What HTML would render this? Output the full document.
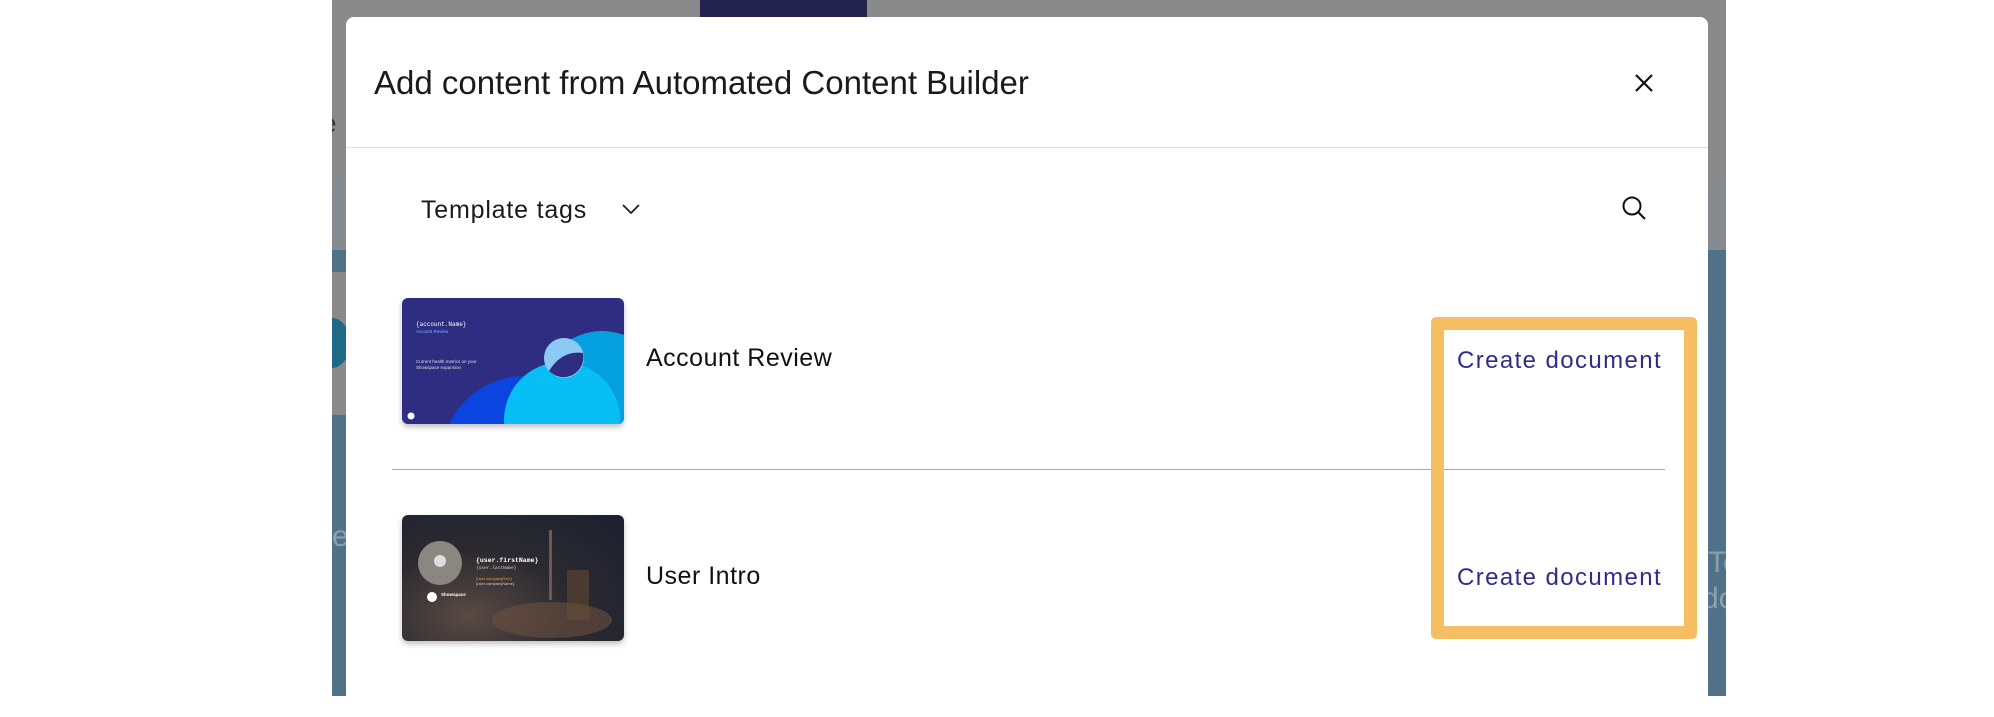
<!DOCTYPE html>
<html><head><meta charset="utf-8"><style>
*{margin:0;padding:0;box-sizing:border-box}
body{width:1994px;height:696px;overflow:hidden;background:#fff;position:relative;font-family:"Liberation Sans",sans-serif}
.abs{position:absolute}
</style></head><body>
<div class="abs" style="left:332px;top:0;width:1394px;height:696px;background:#4f7288;overflow:hidden">
  <div class="abs" style="left:1376px;top:546px;font-size:30px;color:#8aa0ad">Te</div>
  <div class="abs" style="left:1370px;top:582px;font-size:30px;color:#8aa0ad">do</div>
  <div class="abs" style="left:0;top:520px;font-size:30px;color:#8aa0ad">e</div>
</div>
<div class="abs" style="left:332px;top:0;width:1394px;height:175px;background:#8a8a8a"></div>
<div class="abs" style="left:332px;top:175px;width:1394px;height:75px;background:#868b90"></div>
<div class="abs" style="left:332px;top:272px;width:14px;height:143px;background:#8a8a8a"></div>
<div class="abs" style="left:332px;top:318px;width:14px;height:50px;overflow:hidden"><div style="position:absolute;left:-18px;top:0;width:36px;height:50px;border-radius:50%;background:#1d6a86"></div></div>
<div class="abs" style="left:332px;top:108px;width:14px;height:30px;overflow:hidden"><div style="position:absolute;left:-10px;top:0;font-size:26px;color:#333">e</div></div>
<div class="abs" style="left:700px;top:0;width:167px;height:17px;background:#23234d"></div>
<div class="abs" style="left:346px;top:17px;width:1362px;height:700px;background:#fff;border-radius:8px"></div>
<div class="abs" style="left:374px;top:64px;font-size:33px;color:#1a1a1a;white-space:nowrap">Add content from Automated Content Builder</div>
<svg class="abs" style="left:1634px;top:73px" width="20" height="20" viewBox="0 0 20 20"><path d="M2 2L18 18M18 2L2 18" stroke="#111" stroke-width="2.2"/></svg>
<div class="abs" style="left:346px;top:147px;width:1362px;height:1px;background:#e0e0e0"></div>
<div class="abs" style="left:421px;top:196px;font-size:25px;color:#1a1a1a;letter-spacing:0.8px">Template tags</div>
<svg class="abs" style="left:621px;top:202px" width="20" height="14" viewBox="0 0 20 14"><path d="M2 3L10 11L18 3" stroke="#222" stroke-width="1.8" fill="none"/></svg>
<svg class="abs" style="left:1620px;top:194px" width="30" height="30" viewBox="0 0 30 30"><circle cx="12" cy="12" r="8.5" stroke="#111" stroke-width="2" fill="none"/><path d="M18 18L25 25" stroke="#111" stroke-width="2.2"/></svg>
<div class="abs" style="left:402px;top:298px;width:222px;height:126px;border-radius:6px;overflow:hidden;background:#2e2d82;box-shadow:0 3px 6px rgba(0,0,0,.25)">
<svg width="222" height="126" viewBox="0 0 222 126"><circle cx="122" cy="160" r="82" fill="#0a45e0"/><circle cx="200" cy="95" r="62" fill="#05a0e0"/><circle cx="160" cy="122" r="58" fill="#08bff5"/><circle cx="162" cy="60" r="20" fill="#8ccaf5"/><path d="M147 73 Q160 52 181 55 A20 20 0 0 1 147 73Z" fill="#2e2d82"/>
<text x="14" y="28" font-family="Liberation Mono" font-size="6" fill="#fff">{account.Name}</text><text x="14" y="35" font-size="4.5" fill="#7ab0ff" font-family="Liberation Sans">Account Review</text><text x="14" y="65" font-size="4.5" fill="#ddd" font-family="Liberation Sans">Current health metrics on your</text><text x="14" y="71" font-size="4.5" fill="#ddd" font-family="Liberation Sans">Showspace expansion</text><circle cx="9" cy="118" r="3.5" fill="#fff"/></svg></div>
<div class="abs" style="left:646px;top:344px;font-size:25px;color:#111;letter-spacing:0.5px">Account Review</div>
<div class="abs" style="left:392px;top:469px;width:1273px;height:1px;background:#a8a8a8"></div>
<div class="abs" style="left:402px;top:515px;width:222px;height:126px;border-radius:6px;overflow:hidden;background:radial-gradient(ellipse at 30% 80%,#5a4a44 0%,#2c2a30 45%,#1c2030 100%);box-shadow:0 3px 6px rgba(0,0,0,.25)">
<svg width="222" height="126" viewBox="0 0 222 126"><rect x="147" y="15" width="3" height="70" fill="#6a5a50"/><rect x="165" y="55" width="22" height="50" fill="#4a3a30"/><ellipse cx="150" cy="105" rx="60" ry="18" fill="#6a5040" opacity=".6"/><circle cx="38" cy="48" r="22" fill="#8a8680"/><circle cx="38" cy="46" r="6" fill="#ddd"/><text x="74" y="47" font-family="Liberation Mono" font-size="6.5" fill="#fff" font-weight="bold">{user.firstName}</text><text x="74" y="54" font-family="Liberation Mono" font-size="4.5" fill="#ccc">{user.lastName}</text><text x="74" y="65" font-size="4" fill="#e0a030" font-family="Liberation Sans">{user.companyRole}</text><text x="74" y="70" font-size="4" fill="#ccc" font-family="Liberation Sans">{user.companyName}</text><circle cx="30" cy="82" r="5" fill="#fff"/><text x="39" y="81" font-size="4.5" fill="#fff" font-weight="bold" font-family="Liberation Sans">Showspace</text></svg></div>
<div class="abs" style="left:646px;top:562px;font-size:25px;color:#111;letter-spacing:0.5px">User Intro</div>
<div class="abs" style="left:1431px;top:317px;width:266px;height:322px;border:13px solid #f6be62;border-radius:5px"></div>
<div class="abs" style="left:1457px;top:347px;font-size:24px;color:#2f2c8c;letter-spacing:1.4px;white-space:nowrap">Create document</div>
<div class="abs" style="left:1457px;top:564px;font-size:24px;color:#2f2c8c;letter-spacing:1.4px;white-space:nowrap">Create document</div>
</body></html>
